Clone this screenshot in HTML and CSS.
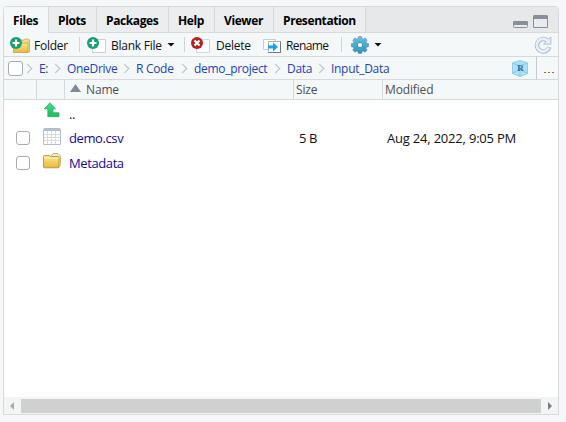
FILE: index.html
```
<!DOCTYPE html>
<html lang="en">
<head>
<meta charset="utf-8">
<title>Files</title>
<link rel="stylesheet" href="styles.css">
</head>
<body>
<svg class="defs" width="0" height="0">
  <defs>
    <linearGradient id="gold" x2="0" y2="1"><stop stop-color="#fbe994"/><stop offset="1" stop-color="#e8b63c"/></linearGradient>
    <linearGradient id="blue" x2="0" y2="1"><stop stop-color="#66c4e2"/><stop offset="1" stop-color="#2f92bb"/></linearGradient>
    <linearGradient id="green" x2="0" y2="1"><stop stop-color="#43df83"/><stop offset="1" stop-color="#22b865"/></linearGradient>
    <symbol id="add" viewBox="0 0 12 12"><circle cx="6" cy="6" r="6" fill="#16a06c"/><path d="M6 2.500v7M2.500 6h7" stroke="#fff" stroke-width="2.2"/></symbol>
  </defs>
</svg>
<div class="pane">
  <div class="tabs">
    <div class="tab files active"><span>Files</span></div>
    <div class="tab plots"><span>Plots</span></div>
    <div class="tab packages"><span>Packages</span></div>
    <div class="tab help"><span>Help</span></div>
    <div class="tab viewer"><span>Viewer</span></div>
    <div class="tab presentation"><span>Presentation</span></div>
    <div class="tabfill">
      <svg width="15" height="7"><rect x=".5" y=".5" width="14" height="6" rx="1" fill="#e9ecee" stroke="#87909a"/><path d="M1 0h13l1 1v3H0V1z" fill="#87909a"/></svg>
      <svg width="15" height="13"><path d="M.5 1v11.500h14V1" fill="#e9ecee" stroke="#87909a"/><path d="M1 0h13l1 1v3H0V1z" fill="#87909a"/></svg>
    </div>
  </div>
  <div class="toolbar">
    <div class="tool folder">
      <svg width="21" height="18"><path d="M8 5l1-1h5l1-1h3.500l1 1v12H8z" fill="#eedb8e" stroke="#c3ab62" stroke-width=".8"/><path d="M3.500 7h14.500v9.500H3.500z" fill="url(#gold)" stroke="#c59b39" stroke-width=".7"/><use href="#add" x="0" y="1" width="12" height="12"/></svg>
      <span>Folder</span>
    </div>
    <i class="sep"></i>
    <div class="tool blank">
      <svg width="20" height="18"><path d="M5.500 3.500h13v13h-13z" fill="#fff" stroke="#c7cdd9"/><use href="#add" x="0" y="1" width="12" height="12"/></svg>
      <span>Blank File</span><i class="caret"></i>
    </div>
    <i class="sep"></i>
    <div class="tool delete">
      <svg width="20" height="18"><path d="M5.500 3.500h13v13h-13z" fill="#fff" stroke="#d0d5df"/><circle cx="6" cy="7" r="6" fill="#b51f20"/><path d="M3.500 4.500l5 5m0-5l-5 5" stroke="#fff" stroke-width="2.200"/></svg>
      <span>Delete</span>
    </div>
    <div class="tool rename">
      <svg width="20" height="18"><path d="M.5 3.500h12v10H.5z" fill="#fff" stroke="#c5cbd7"/><path d="M5.500 5.500h12v11h-12z" fill="#fff" stroke="#a9b2c2"/><path d="M17.500 5.500v11h-12" fill="none" stroke="#69788e"/><path d="M5 9.500h5v-3l5 4.500-5 4.500v-3H5z" fill="#12a5ee"/></svg>
      <span>Rename</span>
    </div>
    <i class="sep"></i>
    <div class="tool gear">
      <svg width="18" height="18" viewBox="0 0 18 18"><g fill="url(#blue)" stroke="#41819e" stroke-width=".5"><path d="M7.400.7h3.200l.4 2.100 1.200.5 1.900-1.300 2.100 2.100-1.200 1.900.5 1.200 2 .3v3.200l-2 .4-.5 1.200 1.200 1.800-2.200 2.200-1.800-1.200-1.200.5-.4 2H7.400L7 15.600l-1.200-.5L4 16.300l-2.300-2.200 1.200-1.800-.5-1.200-2-.4V7.500l2-.3.6-1.200-1.200-1.900L4 2l1.800 1.200L7 2.800z"/></g><circle cx="9" cy="9" r="2.700" fill="#edf7fa" stroke="#418fae"/></svg>
      <i class="caret"></i>
    </div>
    <svg class="refresh" width="18" height="18" viewBox="0 0 18 18"><path d="M13.100 4.300A6.300 6.300 0 1 0 15.300 11.200" fill="none" stroke="#a7b0c5" stroke-width="4.400"/><path d="M16.900 1v7.200H9.600z" fill="#e9eefb" stroke="#a7b0c5" stroke-width=".8"/><path d="M13.900 5A6.300 6.300 0 1 0 14.900 11.500" fill="none" stroke="#e9eefb" stroke-width="2.900"/></svg>
  </div>
  <div class="crumbs">
    <i class="box"></i>
    <i class="chev"></i><a class="c1"><span>E:</span></a>
    <i class="chev"></i><a class="c2"><span>OneDrive</span></a>
    <i class="chev"></i><a class="c3"><span>R Code</span></a>
    <i class="chev"></i><a class="c4"><span>demo_project</span></a>
    <i class="chev"></i><a class="c5"><span>Data</span></a>
    <i class="chev"></i><a class="c6"><span>Input_Data</span></a>
    <svg class="cube" width="16" height="17" viewBox="0 0 16 17"><path d="M8 .5L15.500 3v10.500L8 16.500.5 13.500V3z" fill="#ace2f5" stroke="#8fcfe2"/><path d="M.5 3L8 6l7.500-3M8 6v10M.5 13.500L8 9l7.500 4.500" fill="none" stroke="#74c5de" stroke-width=".8"/><text x="8.300" y="10.500" class="cube-letter">R</text></svg>
    <div class="more"><i></i><i></i><i></i></div>
  </div>
  <div class="head">
    <div class="h-check"></div><div class="h-icon"></div>
    <div class="h-name"><svg width="11" height="8"><path d="M5.500 0L11 8H0z" fill="#808b99"/></svg><span>Name</span></div>
    <div class="h-size"><span>Size</span></div>
    <div class="h-mod"><span>Modified</span></div>
  </div>
  <div class="list">
    <div class="row up">
      <div class="check"></div>
      <div class="icon"><svg width="17" height="16"><path d="M7 .7l5.500 6.100H10v3.900h6v4H4.800V6.800H1.300z" fill="url(#green)" stroke="#27a865" stroke-width=".7"/></svg></div>
      <div class="name"><span>..</span></div><div class="size"></div><div class="mod"></div>
    </div>
    <div class="row csv">
      <div class="check"><i class="box"></i></div>
      <div class="icon"><svg width="18" height="17"><path d="M.5 1.500q0-1 1-1h15q1 0 1 1v15H.5z" fill="#fff" stroke="#b4bdce"/><path d="M1 1h16v2H1z" fill="#b4bfd0"/><path d="M1 6.500h16M1 9.500h16M1 12.500h16M4.500 3v13M8.500 3v13M12.500 3v13" stroke="#d5dae5"/></svg></div>
      <div class="name"><span>demo.csv</span></div><div class="size"><span>5 B</span></div><div class="mod"><span>Aug 24, 2022, 9:05 PM</span></div>
    </div>
    <div class="row meta">
      <div class="check"><i class="box"></i></div>
      <div class="icon"><svg width="19" height="16"><path d="M8 3l2-2.500h5L17.500 3v9l-2 2H5z" fill="#f3edcf" stroke="#b5a66f" stroke-width=".8"/><path d="M.5 3.500q0-1 1-1h5l1 1H15q1 0 1 1V14q0 .8-1 .8H1.500q-1 0-1-.8z" fill="url(#gold)" stroke="#b18a29" stroke-width=".8"/><path d="M1 5h14.500" stroke="#fff3b4"/></svg></div>
      <div class="name"><span>Metadata</span></div><div class="size"></div><div class="mod"></div>
    </div>
  </div>
  <div class="scroll">
    <svg width="17" height="16"><path d="M10 4v8L6 8z" fill="#aaa"/></svg>
    <div class="thumb"></div>
    <svg width="17" height="16"><path d="M7 4v8l4-4z" fill="#7d7d7d"/></svg>
  </div>
</div>
</body>
</html>
```
FILE: styles.css
```
* { box-sizing: border-box; }
body { margin: 0; padding: 6px 0 0 3px; height: 422px; overflow: hidden; background: #f5f7f9; font: 12px/16px "Open Sans", "Noto Sans", sans-serif; color: #111; }
.defs { display: block; }
svg { display: block; flex: none; }
span { display: inline-block; white-space: nowrap; flex: none; }
i { display: block; flex: none; }
.pane { width: 556px; height: 409px; border: 1px solid #d6dadc; border-radius: 4px 4px 0 0; background: #fff; overflow: hidden; display: flex; flex-direction: column; }
.pane > div { flex: none; display: flex; }
.tabs { height: 26px; }
.tab { padding: 6px 0 0 9px; background: #ebedee; border-right: 1px solid #d6dadc; border-bottom: 1px solid #d6dadc; font-weight: bold; color: #000; letter-spacing: -.4px; }
.tab.active { background: #f4f8f9; border-bottom-color: #f4f8f9; }
.files { width: 45px; }
.plots { width: 48px; }
.packages { width: 72px; }
.help { width: 46px; }
.viewer { width: 59px; }
.presentation { width: 92px; }
.tabfill { flex: 1; display: flex; justify-content: flex-end; align-items: flex-end; gap: 5px; padding: 0 10px 4px 0; background: #e6e8e9; border-bottom: 1px solid #d6dadc; }
.pane > .toolbar { height: 24px; background: #f4f8f9; border-bottom: 1px solid #d6dadc; align-items: center; padding-left: 6px; }
.tool { display: flex; align-items: center; letter-spacing: -.25px; }
.tool span { padding-top: 2px; }
.folder { width: 69px; gap: 3px; }
.blank { width: 104px; padding: 0 9px 0 7px; gap: 4px; }
.blank .caret { margin-left: auto; }
.delete { width: 78px; padding-left: 6px; gap: 5px; }
.rename { width: 78px; gap: 3px; letter-spacing: -.6px; }
.gear { width: 42px; padding-left: 9px; gap: 5px; }
.sep { width: 1px; height: 15px; background: #d0d4d7; }
.caret { width: 8px; height: 4px; background: #111; clip-path: polygon(0 0, 100% 0, 50% 100%); }
.refresh { margin-left: auto; margin-right: 6px; }
.pane > .crumbs { height: 23px; background: #f4f8f9; border-bottom: 1px solid #d6dadc; align-items: center; padding-left: 4px; color: #1c42b7; letter-spacing: -.3px; }
.box { width: 14px; height: 14px; border: 1px solid #a8acb0; border-radius: 3px; background: #fff; }
.crumbs .box { margin-right: 2px; width: 15px; height: 15px; }
.chev { width: 7px; height: 7px; border: solid #b9bfc4; border-width: 1px 1px 0 0; transform: translateX(-1px) rotate(45deg); }
.crumbs a { padding: 1px 0 0 7px; }
.c1 { width: 21px; }
.c2 { width: 62px; }
.c3 { width: 51px; }
.c4 { width: 86px; }
.c5 { width: 37px; }
.c6 { width: 66px; }
.cube { margin-left: auto; margin-right: 8px; }
.cube-letter { font: bold 9px "Liberation Serif", serif; fill: #31679b; text-anchor: middle; }
.more { width: 22px; height: 22px; border-left: 1px solid #c5cacf; display: flex; gap: 2px; padding: 15px 0 0 7px; }
.more i { width: 2px; height: 1px; background: #b06a1c; }
.pane > .head { height: 20px; background: #f4f8f9; border-bottom: 1px solid #d6dadc; color: #4b5054; letter-spacing: -.15px; }
.head > div { border-right: 1px solid #d6dadc; padding: 2px 0 0 2px; }
.head .h-check { width: 33px; }
.head .h-icon { width: 28px; }
.head .h-name { width: 229px; display: flex; gap: 5px; padding-left: 5px; }
.h-name svg { margin-top: 2px; }
.head .h-size { width: 89px; }
.head .h-mod { flex: 1; border: 0; }
.pane > .list { flex: 1; flex-direction: column; font-size: 13px; line-height: 18px; }
.row { display: flex; height: 25px; align-items: center; letter-spacing: -.4px; }
.up { margin-top: 1px; }
.up .icon { padding-top: 1px; }
.csv { height: 24px; }
.meta .icon { padding-bottom: 4px; }
.csv .icon { padding-bottom: 3px; }
.check { width: 39px; padding-left: 12px; }
.icon { width: 26px; }
.up .icon { height: 25px; }
.name { width: 230px; color: #1405a0; }
.size { width: 88px; }
.mod { flex: 1; letter-spacing: -.2px; }
.pane > .scroll { height: 17px; background: #f3f4f4; padding-top: 1px; }
.thumb { flex: 1; height: 14px; margin-top: 1px; background: #d0d0d0; }
```
